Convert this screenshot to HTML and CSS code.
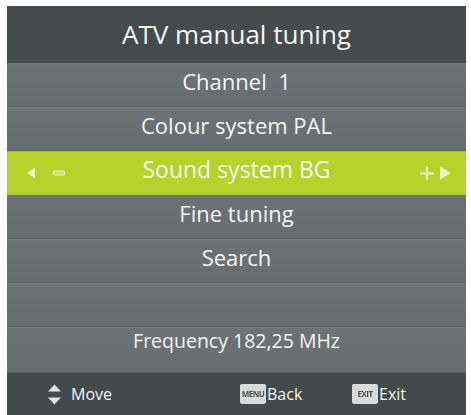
FILE: index.html
```html
<!doctype html>
<html lang="en">
<head>
    <meta charset="utf-8">
    <title>ATV manual tuning</title>
    <link rel="stylesheet" href="styles.css">
</head>
<body>
    <div class="osd">
        <div class="osd_title">ATV manual tuning</div>
        <div class="osd_row">Channel&nbsp; 1</div>
        <div class="osd_row">Colour system PAL</div>
        <div class="osd_row selected">
            <span class="adj adj_left">
                <svg width="40" height="12" viewBox="0 0 40 12">
                    <polygon points="1,6 9,0.5 9,11.5" fill="#eef4c8"/>
                    <rect x="27" y="4" width="12" height="4" rx="2" fill="#cfe07a" stroke="#e8f1b8" stroke-width="1"/>
                </svg>
            </span>
            Sound system BG
            <span class="adj adj_right">
                <svg width="34" height="14" viewBox="0 0 34 14">
                    <path d="M3 7.5h12M9 2v11" stroke="#e4eeb0" stroke-width="2.4" stroke-linecap="round"/>
                    <polygon points="33,7 22,0.5 22,13.5" fill="#eef4c8"/>
                </svg>
            </span>
        </div>
        <div class="osd_row">Fine tuning</div>
        <div class="osd_row">Search</div>
        <div class="osd_row"></div>
        <div class="osd_row freq">Frequency 182,25 MHz</div>
        <div class="osd_footer">
            <span class="hint hint_move">
                <svg width="13" height="21" viewBox="0 0 13 21">
                    <polygon points="6.5,0.5 13,7.5 0,7.5" fill="#e2e4e4"/>
                    <polygon points="0,13.5 13,13.5 6.5,20.5" fill="#e2e4e4"/>
                </svg>
                Move
            </span>
            <span class="hint hint_back"><span class="key">MENU</span><span class="key_label">Back</span></span>
            <span class="hint"><span class="key">EXIT</span><span class="key_label">Exit</span></span>
        </div>
    </div>
</body>
</html>
```

FILE: styles.css
```css
body {
    margin: 0;
    background: #fff;
    font-family: "Open Sans", "Noto Sans", sans-serif;
    color: #f4f5f4;
}

.osd {
    width: 459px;
    margin: 6px 0 0 7px;
    background: #6a6f72;
}

.osd_title {
    height: 57px;
    line-height: 57px;
    text-align: center;
    font-size: 26px;
    background: #464b4d;
    padding-bottom: 3px;
    box-sizing: border-box;
}

.osd_row {
    position: relative;
    height: 44px;
    box-sizing: border-box;
    display: flex;
    align-items: center;
    justify-content: center;
    padding-bottom: 9px;
    font-size: 22px;
    background: linear-gradient(#6d7275, #676c6f);
    border-top: 1px solid #74797c;
    border-bottom: 1px solid #5b6063;
}

.osd_row.selected {
    background: #b7d22b;
    border-top-color: #a9c124;
    border-bottom-color: #a9c124;
    font-size: 23px;
}

.osd_row.freq {
    height: 46px;
    font-size: 19.5px;
    padding-bottom: 20px;
}

.adj {
    position: absolute;
    top: 15px;
    display: flex;
}

.adj_left {
    left: 19px;
}

.adj_right {
    right: 14px;
    top: 14px;
}

.osd_footer {
    height: 44px;
    display: flex;
    align-items: center;
    padding-left: 41px;
    padding-bottom: 2px;
    box-sizing: border-box;
    background: #44494b;
    font-size: 16px;
}

.hint {
    display: flex;
    align-items: center;
}

.hint_move {
    width: 192px;
    gap: 10px;
}

.hint_back {
    width: 112px;
}

.key {
    width: 26px;
    height: 20px;
    line-height: 20px;
    text-align: center;
    font-size: 8px;
    font-weight: 700;
    letter-spacing: -0.5px;
    color: #4a4f51;
    background: #d8dbda;
    border-radius: 2px;
    filter: blur(0.6px);
}

.key_label {
    margin-left: 1px;
}
```
